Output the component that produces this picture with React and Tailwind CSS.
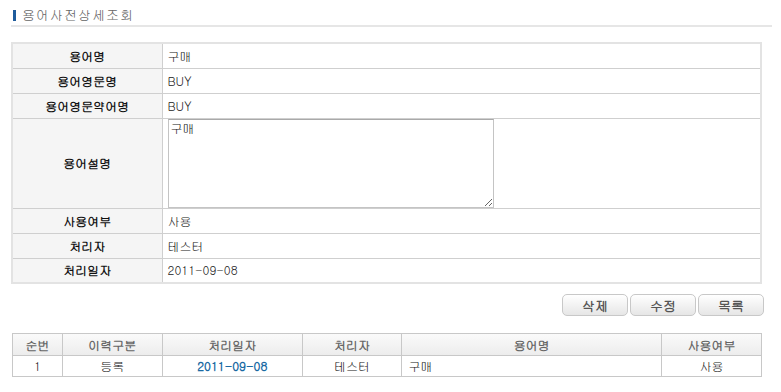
const rows = [
  { label: "용어명", value: "구매" },
  { label: "용어영문명", value: "BUY" },
  { label: "용어영문약어명", value: "BUY" },
  { label: "용어설명", textarea: "구매" },
  { label: "사용여부", value: "사용" },
  { label: "처리자", value: "테스터" },
  { label: "처리일자", value: "2011-09-08" },
];

const history = [
  { no: 1, kind: "등록", date: "2011-09-08", user: "테스터", name: "구매", use: "사용" },
];

const font = { fontFamily: "Gulim, 'Noto Sans CJK KR', 'Liberation Sans', sans-serif" };

function Button({ children }) {
  return (
    <button className="w-[66px] h-[22px] rounded-[5px] border border-[#c8c8c8] bg-gradient-to-b from-[#ffffff] to-[#e6e6e6] text-[13px] font-bold text-[#555] leading-none">
      {children}
    </button>
  );
}

export default function App() {
  return (
    <div className="w-[781px] h-[392px] bg-white text-[12px] text-[#222] overflow-hidden" style={font}>
      {/* title */}
      <div className="ml-[11px] mr-[9px] mt-[7px] pb-[2px] border-b-2 border-[#e6e6e6] flex items-center h-[16px] box-content">
        <span className="w-[3px] h-[11px] bg-[#1f5c9c] ml-[2px] mr-[6px]" />
        <span className="text-[13px] text-[#666] tracking-[1px]">용어사전상세조회</span>
      </div>

      {/* detail table */}
      <table className="ml-[11px] mt-[15px] w-[751px] border-collapse border-2 border-[#e3e3e3]">
        <tbody>
          {rows.map((r) => (
            <tr key={r.label} className={r.textarea ? "h-[90px]" : "h-[25px]"}>
              <th className="w-[150px] bg-[#f5f5f5] border-t border-r border-[#cfcfcf] font-bold text-[12px] text-[#111] text-center">
                {r.label}
              </th>
              <td className="border-t border-[#cfcfcf] pl-[5px] py-0">
                {r.textarea ? (
                  <textarea
                    readOnly
                    defaultValue={r.textarea}
                    className="block w-[326px] h-[89px] border border-[#c4c4c4] border-t-[#a9a9a9] px-[2px] py-0 text-[12px] leading-[15px] resize-y outline-none"
                    style={font}
                  />
                ) : (
                  r.value
                )}
              </td>
            </tr>
          ))}
        </tbody>
      </table>

      {/* buttons */}
      <div className="flex justify-end gap-[2px] mr-[17px] mt-[10px]">
        <Button>삭제</Button>
        <Button>수정</Button>
        <Button>목록</Button>
      </div>

      {/* history */}
      <table className="ml-[12px] mt-[17px] w-[750px] border-collapse border border-[#c8c8c8] text-center">
        <thead>
          <tr className="h-[22px] bg-gradient-to-b from-[#fafafa] to-[#ececec]">
            {["순번", "이력구분", "처리일자", "처리자", "용어명", "사용여부"].map((h, i) => (
              <th
                key={h}
                className={`border border-[#c8c8c8] font-bold text-[12px] text-[#666] ${
                  ["w-[50px]", "w-[100px]", "w-[140px]", "w-[100px]", "w-[260px]", "w-[100px]"][i]
                }`}
              >
                {h}
              </th>
            ))}
          </tr>
        </thead>
        <tbody>
          {history.map((h) => (
            <tr key={h.no} className="h-[21px]">
              <td className="border border-[#c8c8c8]">{h.no}</td>
              <td className="border border-[#c8c8c8]">{h.kind}</td>
              <td className="border border-[#c8c8c8] font-bold text-[#1a6aa3]">{h.date}</td>
              <td className="border border-[#c8c8c8]">{h.user}</td>
              <td className="border border-[#c8c8c8] text-left pl-[6px]">{h.name}</td>
              <td className="border border-[#c8c8c8]">{h.use}</td>
            </tr>
          ))}
        </tbody>
      </table>
    </div>
  );
}
